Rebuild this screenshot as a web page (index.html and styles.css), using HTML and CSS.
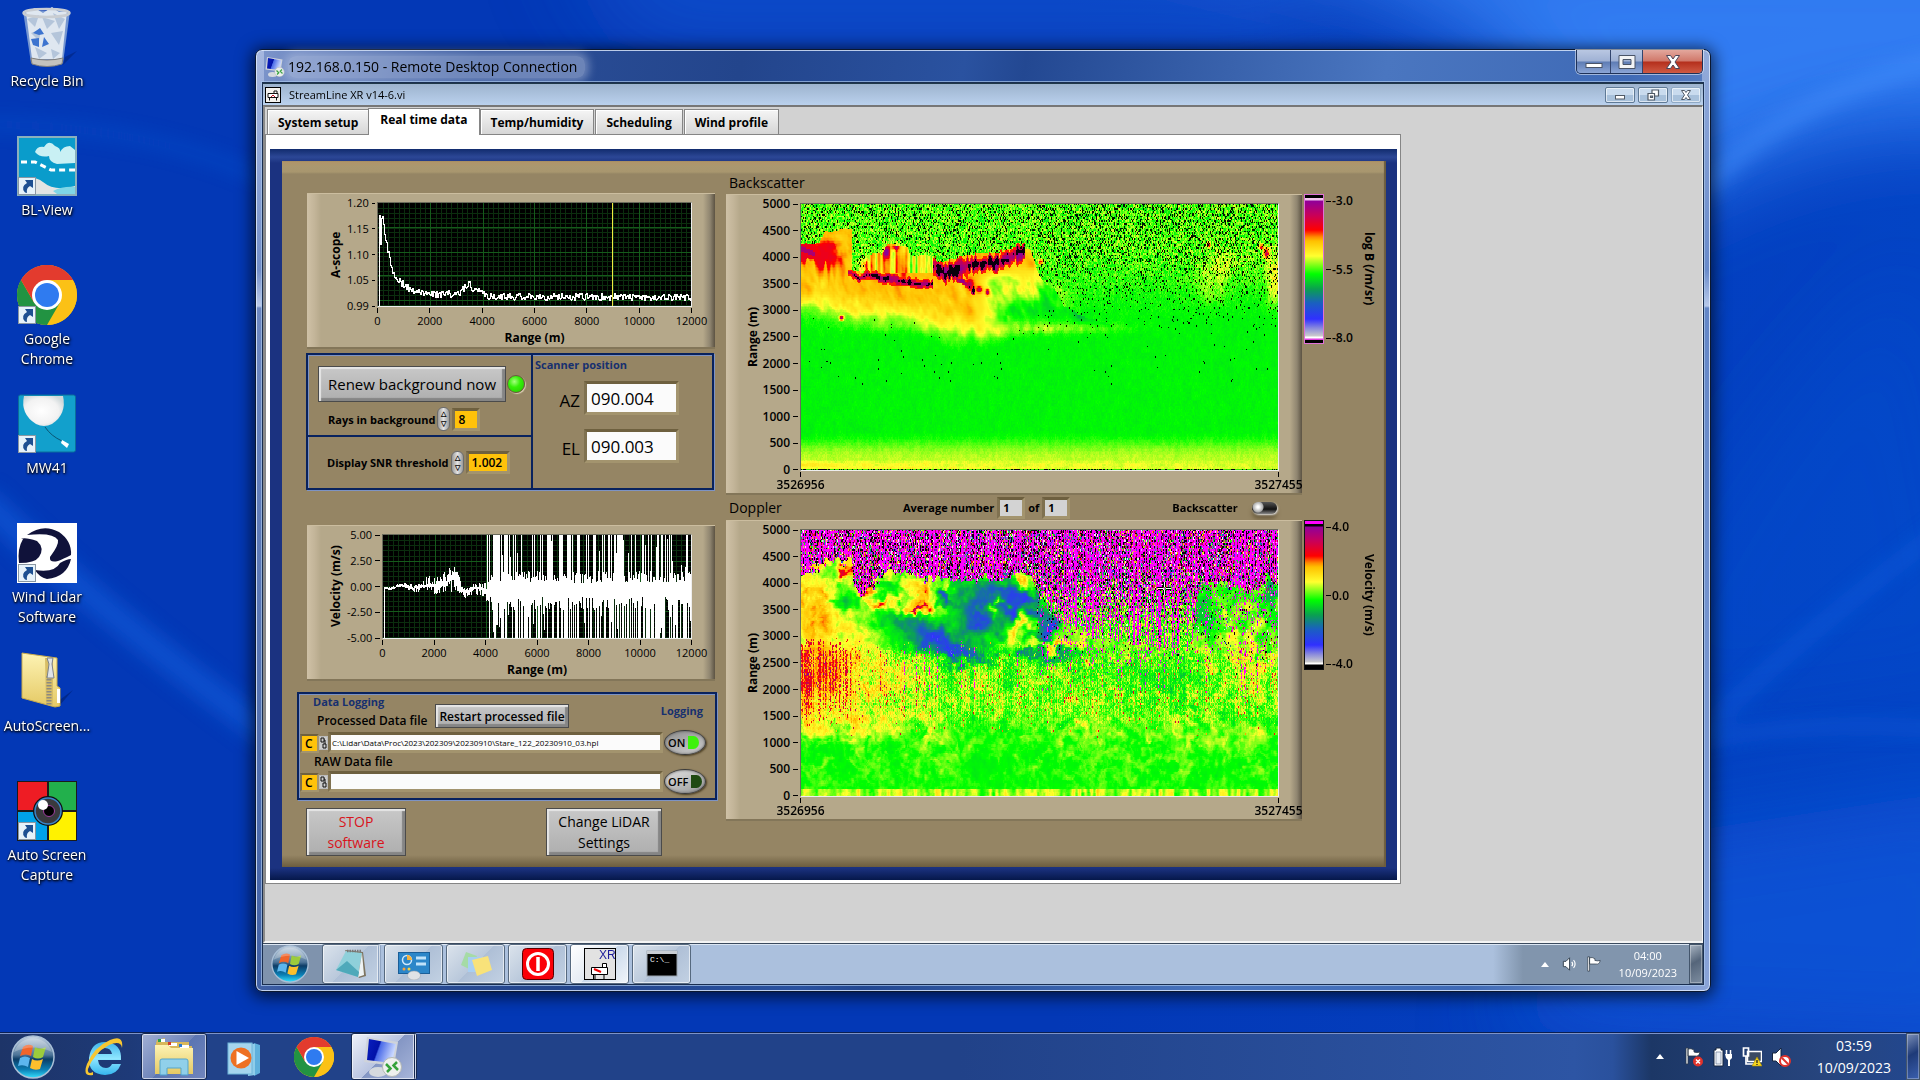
FILE: index.html
```html
<!DOCTYPE html>
<html lang="en">
<head>
  <meta charset="UTF-8">
  <meta name="viewport" content="width=device-width, initial-scale=1.0">
  <title>192.168.0.150 - Remote Desktop Connection</title>
  <link rel="stylesheet" href="styles.css">
</head>
<body>
  <!-- shared icons -->
  <svg class="defs" aria-hidden="true">
    <defs>
      <linearGradient id="orbTop" x1="0" y1="0" x2="0" y2="1">
        <stop offset="0" stop-color="#c9d6e4"/><stop offset=".45" stop-color="#4d7498"/><stop offset=".55" stop-color="#0c3c66"/><stop offset=".8" stop-color="#0b7fb5"/><stop offset="1" stop-color="#35e2ff"/>
      </linearGradient>
      <linearGradient id="screenBlue" x1="0" y1="0" x2="1" y2=".3">
        <stop offset="0" stop-color="#0a1fc0"/><stop offset=".45" stop-color="#0212a8"/><stop offset=".5" stop-color="#4a6ae8"/><stop offset="1" stop-color="#c9d8ff"/>
      </linearGradient>
      <linearGradient id="paper" x1="0" y1="0" x2="0" y2="1">
        <stop offset="0" stop-color="#fdf3b4"/><stop offset="1" stop-color="#e5c964"/>
      </linearGradient>
      <linearGradient id="ieBlue" x1="0" y1="0" x2="0" y2="1">
        <stop offset="0" stop-color="#3fb4ea"/><stop offset=".5" stop-color="#8fe6ff"/><stop offset="1" stop-color="#35b6ee"/>
      </linearGradient>
      <radialGradient id="balloon" cx=".45" cy=".5" r=".6">
        <stop offset="0" stop-color="#fff"/><stop offset=".7" stop-color="#f2f2f2"/><stop offset="1" stop-color="#cfd8da"/>
      </radialGradient>
      <symbol id="chrome" viewBox="0 0 60 60">
        <circle cx="30" cy="30" r="30" fill="#fbc116"/>
        <path d="M30 30 L4 15 A30 30 0 0 1 56 15 Z" fill="#e33b2e"/>
        <path d="M30 15 H56 A30 30 0 0 1 30 60 L43 37.500Z" fill="#fbc116"/>
        <path d="M17 37.500 L4 15 A30 30 0 0 0 30 60 L43 37.500 Z" fill="#229342"/>
        <path d="M4 15 L17 37.500 L20 20 L30 15 Z" fill="#e33b2e"/>
        <circle cx="30" cy="30" r="15" fill="#fff"/>
        <circle cx="30" cy="30" r="12" fill="#2f7bf0"/>
      </symbol>
      <symbol id="orb" viewBox="0 0 44 44">
        <circle cx="22" cy="22" r="21" fill="url(#orbTop)" stroke="#a9bfd6" stroke-width="1.500"/>
        <path d="M12 12 Q17 8 22 11 L20 21 Q15 18 9 21 Z" fill="#f0652b"/>
        <path d="M24 12 Q29 15 35 12 L32 22 Q27 25 22 22 Z" fill="#9ccb3c"/>
        <path d="M9 23 Q14 20 19 23 L17 32 Q12 29 7 31 Z" fill="#5cb6ee"/>
        <path d="M21 24 Q26 27 32 24 L29 34 Q24 36 19 33 Z" fill="#fdbf2d"/>
        <path d="M3 17 A20 20 0 0 1 41 17 Q22 8 3 17Z" fill="#fff" opacity=".25"/>
      </symbol>
      <symbol id="shortcut" viewBox="0 0 18 18">
        <rect x=".5" y=".5" width="17" height="17" fill="#e6f2fa" stroke="#8a97a3"/>
        <path d="M7 3 H15 V11 L12 9 Q8 11 9 16 L7 15.500 Q2 10 9 6 Z" fill="#1d4f91"/>
      </symbol>
      <symbol id="rdc" viewBox="0 0 40 40">
        <ellipse cx="15" cy="35" rx="9" ry="5" fill="#d5d9de"/>
        <path d="M4 0 L35 5 L31 29 L1 25 Z" fill="#cfd3da"/>
        <path d="M6 2 L33 7 L29 26 L4 23 Z" fill="url(#screenBlue)"/>
        <circle cx="29" cy="30" r="9.500" fill="#eef0ee" stroke="#b5b9b5"/>
        <path d="M23 27 l4.500 4.500 -3.500 3.500 M35 33 l-4.500 -4.500 3.500 -3.500" fill="none" stroke="#35a23a" stroke-width="2.500"/>
      </symbol>
      <symbol id="speaker" viewBox="0 0 18 16">
        <path d="M1.500 5 H4.500 L8.500 1 V15 L4.500 11 H1.500 Z" fill="#fff" stroke="#2b3846"/>
        <path d="M11 5.500 q2 2.500 0 5 M13 3.500 q3.500 4.500 0 9" fill="none" stroke="#fff" stroke-width="1.300"/>
      </symbol>
      <symbol id="flag" viewBox="0 0 18 18">
        <path d="M2 1 H4 V17 H2 Z M4 2 Q7 1 10 3 V5 Q13 6 16 5 Q15 10 11 9 L4 9 Z" fill="#fff" stroke="#2b3846" stroke-width=".8"/>
      </symbol>
      <symbol id="path" viewBox="0 0 7 12">
        <path d="M1 1 h3 v4 h-3 z M3 7 h3 v4 h-3 z M4 3 h1 v4" fill="none" stroke="#111"/>
      </symbol>
    </defs>
  </svg>

  <main class="desktop">
    <svg class="wallpaper" viewBox="0 0 1920 1080" preserveAspectRatio="none" aria-hidden="true">
      <defs>
        <filter id="soft"><feGaussianBlur stdDeviation="10"/></filter>
        <filter id="softer"><feGaussianBlur stdDeviation="45"/></filter>
      </defs>
      <g filter="url(#softer)">
        <path d="M1200 -80 L2050 -80 L2050 150 Q1860 90 1640 230 L1480 40Z" fill="#3a86fa" opacity=".85"/>
        <path d="M560 -60 L1300 -60 L1300 40 L640 40Z" fill="#1f66e6" opacity=".5"/>
        <path d="M1920 260 Q1700 470 1600 760 L2000 700Z" fill="#0a55d6" opacity=".25"/>
        <path d="M1500 1080 L1620 880 L2000 820 L2000 1100Z" fill="#0b5ae0" opacity=".6"/>
      </g>
      <g filter="url(#soft)" fill="none" stroke="#1268e6" opacity=".5">
        <path d="M-20 130 Q150 130 270 190" stroke-width="7"/>
        <path d="M-20 520 Q100 640 270 770" stroke-width="28"/>
        <path d="M1680 790 Q1780 680 1960 540" stroke-width="12"/>
        <path d="M1680 780 Q1800 750 1960 765" stroke-width="10"/>
        <path d="M1700 200 Q1800 90 1960 60" stroke-width="20" stroke="#4a94ff"/>
      </g>
    </svg>

    <nav class="icons" aria-label="Desktop">
      <a class="icon" href="#">
        <svg viewBox="0 0 60 60" aria-hidden="true">
          <path d="M48 50 L60 44 L46 58Z" fill="#001a60" opacity=".4"/>
          <path d="M6 4 L53 4 L46 56 Q30 60 14 56 Z" fill="#9cb6da" opacity=".75"/>
          <path d="M9 5 L18 1 L26 6 L35 0 L42 5 L50 4 L45 52 L15 52 Z" fill="#dfe7f0"/>
          <path d="M10 12 L22 8 L18 20Z M25 10 L38 14 L30 22Z M36 6 L48 12 L42 22Z M14 26 L24 22 L22 34Z M34 26 L46 24 L42 38Z M18 40 L30 46 L22 52Z M34 42 L43 46 L36 52Z" fill="#b4c5da"/>
          <path d="M16 26 L23 21 L27 27 L22 28Z M27 30 L32 37 L25 40Z M14 32 L22 31 L22 40 L16 38Z" fill="#3d74cf"/>
          <ellipse cx="29.500" cy="6" rx="23" ry="4" fill="none" stroke="#c9cdd2" stroke-width="2.500"/>
          <path d="M14 51 Q30 55 46 51 L45 57 Q30 62 15 57Z" fill="#c3c2be" stroke="#807f7c"/>
        </svg>
        <span>Recycle Bin</span>
      </a>
      <a class="icon" href="#">
        <svg viewBox="0 0 60 60" aria-hidden="true">
          <rect width="60" height="60" fill="#8ab0bd"/><rect x="2" y="2" width="56" height="56" fill="#0a9ccb"/>
          <path d="M18 16 q2-6 9-5 q5-8 11-1 q6 2 5 6 q3-6 10-6 l5 4 v13 l-18 1 q-8-2-8-8 q-9 2-14-4Z" fill="#c9f0f4"/>
          <path d="M4 26 H18 L34 34 H58" fill="none" stroke="#fff" stroke-width="3" stroke-dasharray="6 4"/>
          <path d="M2 58 V44 Q16 38 26 46 Q38 56 58 50 V58Z" fill="#e2e4e3"/><path d="M36 55 Q46 50 58 51 V58 H40Z" fill="#7fd6e6"/>
          <use href="#shortcut" x="1" y="41" width="18" height="18"/>
        </svg>
        <span>BL-View</span>
      </a>
      <a class="icon" href="#">
        <svg viewBox="0 0 60 60" aria-hidden="true"><use href="#chrome"/><use href="#shortcut" x="1" y="41" width="18" height="18"/></svg>
        <span>Google Chrome</span>
      </a>
      <a class="icon" href="#">
        <svg viewBox="0 0 60 60" aria-hidden="true">
          <rect x="1.500" y="1" width="57" height="57" rx="2" fill="#12a0cc" stroke="#0b6f9b"/>
          <path d="M7 2 H46 Q50 20 35 30 Q27 34 19 30 Q3 20 7 2Z" fill="url(#balloon)"/>
          <path d="M28 33 Q34 42 45 47" fill="none" stroke="#0a5674"/><path d="M45 46 l7 4 -2 4 -6 -5Z" fill="#fff"/>
          <use href="#shortcut" x="1" y="41" width="18" height="18"/>
        </svg>
        <span>MW41</span>
      </a>
      <a class="icon" href="#">
        <svg viewBox="0 0 60 60" aria-hidden="true">
          <rect width="60" height="60" fill="#fff"/>
          <path d="M4 16 Q8 14 20 18 Q28 25 22 34 Q18 40 2 40 Q0 26 6 16Z" fill="#10123a"/>
          <path d="M10 12 Q26 0 42 9 Q55 18 54 32 Q46 36 41 38 Q32 40 33 34 Q42 22 41 17 Q36 9 10 12Z" fill="#10123a"/>
          <path d="M18 47 Q38 50 43 40 Q50 36 54 36 Q50 54 30 56 Q22 54 18 47Z" fill="#10123a"/>
          <use href="#shortcut" x="1" y="41" width="18" height="18"/>
        </svg>
        <span>Wind Lidar Software</span>
      </a>
      <a class="icon" href="#">
        <svg viewBox="0 0 60 60" aria-hidden="true">
          <path d="M40 50 L56 38 L42 54Z" fill="#001a60" opacity=".5"/>
          <path d="M5 1 L40 6 V34 L43 36 V54 L38 55 L5 46 Z" fill="url(#paper)" stroke="#c9ab4c"/>
          <path d="M28 6 H36 V54 L29 52Z" fill="#d8be66"/>
          <path d="M32 24 V53" stroke="#8c8a80" stroke-width="5" stroke-dasharray="1.500 1.500"/>
          <path d="M30 6 h6 l-1 6 2 14 h-7 l2 -14Z" fill="#dfe3e8" stroke="#7c828a"/>
          <rect x="40" y="37" width="3" height="14" fill="#fff"/>
        </svg>
        <span>AutoScreen...</span>
      </a>
      <a class="icon" href="#">
        <svg viewBox="0 0 60 60" aria-hidden="true">
          <rect width="60" height="60" fill="#1b1b1b"/>
          <path d="M1 1h29v28H1z" fill="#ee1c24"/><path d="M32 1h27v28H32z" fill="#22b04c"/><path d="M1 31h29v28H1z" fill="#00a2e8"/><path d="M32 31h27v28H32z" fill="#fff200"/>
          <circle cx="31" cy="30" r="15" fill="#111"/><circle cx="31" cy="30" r="13" fill="#3a3a3e" stroke="#3a86c8" stroke-width="1.500"/>
          <circle cx="32" cy="30" r="5.500" fill="#000" stroke="#a040a0"/><circle cx="26" cy="24" r="5" fill="#fff"/>
          <use href="#shortcut" x="1" y="41" width="18" height="18"/>
        </svg>
        <span>Auto Screen Capture</span>
      </a>
    </nav>

    <section class="window">
      <header class="titlebar">
        <svg class="titlebar-icon" aria-hidden="true"><use href="#rdc"/></svg>
        <h1>192.168.0.150 - Remote Desktop Connection</h1>
        <div class="window-buttons">
          <button class="wb wb-min" aria-label="Minimize"><svg viewBox="0 0 18 16"><rect x="1" y="9.500" width="16" height="4" fill="#fff" stroke="#4a5468"/></svg></button>
          <button class="wb wb-max" aria-label="Maximize"><svg viewBox="0 0 18 16"><path d="M1 1.500h16v13H1z M5 5.500v5h8v-5z" fill="#f3f4f6" fill-rule="evenodd" stroke="#4a5468"/></svg></button>
          <button class="wb wb-close" aria-label="Close"><svg viewBox="0 0 18 16"><path d="M2.500 1.500h4l2.500 3.500 2.500-3.500h4l-4.500 6.500 4.500 6.500h-4l-2.500-3.500-2.500 3.500h-4l4.500-6.500z" fill="#fff" stroke="#4a4458"/></svg></button>
        </div>
      </header>

      <div class="client">
        <div class="mdi-title">
          <svg class="mdi-icon" viewBox="0 0 16 16" aria-hidden="true"><rect x=".5" y=".5" width="15" height="15" fill="#f4f2ee" stroke="#000"/><path d="M3 6.500h10v4H3z M4.500 10.500v3 M11.500 10.500v3 M9 6V4h3v2" fill="#fff" stroke="#111"/><path d="M6 10l2-2 2 2" stroke="#c01020" fill="none"/></svg>
          <h2>StreamLine XR v14-6.vi</h2>
          <div class="mdi-buttons">
            <button aria-label="Minimize"><svg viewBox="0 0 14 12"><rect x="2.500" y="6.500" width="9" height="3.500" fill="#fff" stroke="#505a66"/></svg></button>
            <button aria-label="Restore"><svg viewBox="0 0 14 12"><path d="M6 1h6.500v6H6z" fill="#fff" stroke="#505a66" stroke-width="1.200"/><path d="M2 4.500h6.500v6.500H2z M4.500 7v1.500h2V7z" fill="#fff" stroke="#505a66" stroke-width="1.200"/></svg></button>
            <button class="dim" aria-label="Close"><svg viewBox="0 0 14 12"><path d="M2.500 1.500h3l1.500 2 1.500-2h3l-3 4.500 3 4.500h-3l-1.500-2-1.500 2h-3l3-4.500z" fill="#fff" stroke="#505a66"/></svg></button>
          </div>
        </div>

        <div class="workspace">
          <div class="tabs" role="tablist">
            <button class="tab" role="tab">System setup</button>
            <button class="tab active" role="tab" aria-selected="true">Real time data</button>
            <button class="tab" role="tab">Temp/humidity</button>
            <button class="tab" role="tab">Scheduling</button>
            <button class="tab" role="tab">Wind profile</button>
          </div>

          <div class="pane">
            <div class="frame">
              <div class="panel">
                <div class="left">
                  <div class="chart chart-a">
                    <div class="y-title">A-scope</div>
                    <ul class="y-ticks small"><li>1.20</li><li>1.15</li><li>1.10</li><li>1.05</li><li>0.99</li></ul>
                    <canvas id="ascope" class="plot" width="314" height="104" role="img" aria-label="A-scope"></canvas>
                    <ul class="x-ticks small"><li>0</li><li>2000</li><li>4000</li><li>6000</li><li>8000</li><li>10000</li><li>12000</li></ul>
                    <div class="x-title">Range (m)</div>
                  </div>

                  <div class="settings box">
                    <div class="renew">
                      <div class="renew-row">
                        <button class="lv-button lv-large">Renew background now</button>
                        <span class="led"></span>
                      </div>
                      <div class="field">
                        <label for="rays">Rays in background</label>
                        <button class="spin" aria-label="Step rays">&#9651;<br>&#9661;</button>
                        <input class="num rays" id="rays" type="text" value="8">
                      </div>
                    </div>
                    <div class="snr field">
                      <label for="snr">Display SNR threshold</label>
                      <button class="spin" aria-label="Step threshold">&#9651;<br>&#9661;</button>
                      <input class="num" id="snr" type="text" value="1.002">
                    </div>
                    <div class="scanner">
                      <h3 class="blue">Scanner position</h3>
                      <div class="pos"><label for="az">AZ</label><input id="az" type="text" value="090.004"></div>
                      <div class="pos"><label for="el">EL</label><input id="el" type="text" value="090.003"></div>
                    </div>
                  </div>

                  <div class="chart chart-v">
                    <div class="y-title">Velocity (m/s)</div>
                    <ul class="y-ticks small"><li>5.00</li><li>2.50</li><li>0.00</li><li>-2.50</li><li>-5.00</li></ul>
                    <canvas id="velocity" class="plot" width="309" height="104" role="img" aria-label="Velocity"></canvas>
                    <ul class="x-ticks small"><li>0</li><li>2000</li><li>4000</li><li>6000</li><li>8000</li><li>10000</li><li>12000</li></ul>
                    <div class="x-title">Range (m)</div>
                  </div>

                  <div class="logging box">
                    <div class="logging-head">
                      <div>
                        <h3 class="blue">Data Logging</h3>
                        <label for="proc">Processed Data file</label>
                      </div>
                      <button class="lv-button">Restart processed file</button>
                      <h3 class="blue logging-label">Logging</h3>
                    </div>
                    <div class="path-row">
                      <span class="drive">C</span>
                      <svg class="path-icon" aria-hidden="true"><use href="#path"/></svg>
                      <input id="proc" type="text" value="C:\Lidar\Data\Proc\2023\202309\20230910\Stare_122_20230910_03.hpl">
                      <button class="oval on">ON</button>
                    </div>
                    <label class="raw-label" for="raw">RAW Data file</label>
                    <div class="path-row">
                      <span class="drive">C</span>
                      <svg class="path-icon" aria-hidden="true"><use href="#path"/></svg>
                      <input id="raw" type="text" value="">
                      <button class="oval">OFF</button>
                    </div>
                  </div>

                  <div class="actions">
                    <button class="lv-button stop">STOP<br>software</button>
                    <button class="lv-button change">Change LiDAR<br>Settings</button>
                  </div>
                </div>

                <div class="right">
                  <div class="map-head"><h3>Backscatter</h3></div>
                  <div class="map-row">
                    <div class="chart chart-map">
                      <div class="y-title">Range (m)</div>
                      <ul class="y-ticks"><li>5000</li><li>4500</li><li>4000</li><li>3500</li><li>3000</li><li>2500</li><li>2000</li><li>1500</li><li>1000</li><li>500</li><li>0</li></ul>
                      <canvas id="backscatter" class="plot" width="478" height="178" role="img" aria-label="Backscatter"></canvas>
                      <ul class="x-ticks"><li>3526956</li><li>3527455</li></ul>
                    </div>
                    <div class="scale scale-b"></div>
                    <ul class="scale-ticks"><li>-3.0</li><li>-5.5</li><li>-8.0</li></ul>
                    <div class="scale-title">log B (/m/sr)</div>
                  </div>

                  <div class="map-head">
                    <h3>Doppler</h3>
                    <div class="average">
                      <label for="avg">Average number</label>
                      <input id="avg" type="text" value="1">
                      <label for="avgof">of</label>
                      <input id="avgof" type="text" value="1">
                    </div>
                    <label class="toggle">Backscatter <input type="checkbox"></label>
                  </div>
                  <div class="map-row">
                    <div class="chart chart-map">
                      <div class="y-title">Range (m)</div>
                      <ul class="y-ticks"><li>5000</li><li>4500</li><li>4000</li><li>3500</li><li>3000</li><li>2500</li><li>2000</li><li>1500</li><li>1000</li><li>500</li><li>0</li></ul>
                      <canvas id="doppler" class="plot" width="478" height="178" role="img" aria-label="Doppler"></canvas>
                      <svg class="cross" viewBox="0 0 13 13" aria-hidden="true"><path d="M6.500 0v5M6.500 8v5M0 6.500h5M8 6.500h5" stroke="#000" stroke-width="3"/><path d="M6.500 0v5M6.500 8v5M0 6.500h5M8 6.500h5" stroke="#fff"/></svg>
                      <ul class="x-ticks"><li>3526956</li><li>3527455</li></ul>
                    </div>
                    <div class="scale scale-v"></div>
                    <ul class="scale-ticks"><li>4.0</li><li>0.0</li><li>-4.0</li></ul>
                    <div class="scale-title">Velocity (m/s)</div>
                  </div>
                </div>
              </div>
            </div>
          </div>
        </div>

        <footer class="taskbar remote">
          <button class="start" aria-label="Start"><svg aria-hidden="true"><use href="#orb"/></svg></button>
          <div class="tasks">
            <button class="task stacked" aria-label="Notepad"><svg viewBox="0 0 32 32"><path d="M10 2 L28 4 L31 28 L24 30Z" fill="#7d7460"/><path d="M11 3 L27 5 L23 29 L1 22 Z" fill="#8fd0da"/><path d="M27 5 L23 29 L29 27Z" fill="#eef3f4"/><path d="M1 22 L12 13 L24 24 L23 29Z" fill="#4fa9ba"/><path d="M12 3h15" stroke="#777" stroke-width="2.500" stroke-dasharray="1.500 1"/></svg></button>
            <button class="task" aria-label="Control panel"><svg viewBox="0 0 32 32"><rect x=".5" y="4.500" width="31" height="21" fill="#2b86c9" stroke="#1a5e98"/><circle cx="9" cy="12" r="4.500" fill="none" stroke="#cfe8fb" stroke-width="1.500"/><path d="M9 12V7a5 5 0 0 1 5 5z" fill="#f6b23d"/><path d="M18 10h10M18 16h10" stroke="#bfe2fa" stroke-width="3"/><circle cx="6" cy="21" r="1.500" fill="#f6a23d"/><circle cx="11" cy="21" r="1.500" fill="#f6d23d"/><ellipse cx="16" cy="27.500" rx="6.500" ry="4.500" fill="#dfe2e6" stroke="#9aa0a8" stroke-width=".5"/></svg></button>
            <button class="task" aria-label="Sticky notes"><svg viewBox="0 0 32 32"><path d="M6 4 L17 8 L11 22 L1 17Z" fill="#a5dba6"/><path d="M8 9 h15 v15 h-15z" fill="#a8cff2"/><path d="M12 12 L28 8 L32 22 L17 28Z" fill="#f8e27a"/></svg></button>
            <button class="task" aria-label="Power"><svg viewBox="0 0 32 32"><rect x=".5" y=".5" width="31" height="31" rx="4" fill="#fb0007" stroke="#5a0000"/><circle cx="16" cy="16" r="10.500" fill="none" stroke="#fff" stroke-width="3"/><path d="M16 9v14" stroke="#fff" stroke-width="3.500"/></svg></button>
            <button class="task current" aria-label="StreamLine XR"><svg viewBox="0 0 32 32"><rect x=".5" y=".5" width="31" height="31" fill="#e2e2e2" stroke="#000"/><text class="xr" x="15" y="11">XR</text><path d="M7.500 19.500h16v7h-16z M11 27v4.500 M20 27v4.500 M9.500 27v4.500 M18.500 19v-3.500h4v3.500" fill="#fff" stroke="#000"/><path d="M10 21l7 3" stroke="#e00" stroke-width="2"/></svg></button>
            <button class="task" aria-label="Command prompt"><svg viewBox="0 0 32 32"><rect x="1" y="3" width="30" height="25" fill="#000" stroke="#9aa4ae"/><rect x="1" y="3" width="30" height="3" fill="#c9ced4"/><text class="cmd" x="4" y="14">C:\_</text></svg></button>
          </div>
          <div class="tray">
            <span class="chevron"></span>
            <svg class="tray-icon" aria-hidden="true"><use href="#speaker"/></svg>
            <svg class="tray-icon" aria-hidden="true"><use href="#flag"/></svg>
            <time class="clock">04:00<br>10/09/2023</time>
          </div>
          <button class="peek" aria-label="Show desktop"></button>
        </footer>
      </div>
    </section>
  </main>

  <footer class="taskbar host">
    <button class="start" aria-label="Start"><svg aria-hidden="true"><use href="#orb"/></svg></button>
    <div class="tasks">
      <button class="task plain" aria-label="Internet Explorer"><svg viewBox="0 0 40 40"><path d="M37 23 H14 Q15 31 22 31 Q26 31 28 27 H37 Q33 38 21 38 Q4 37 5 21 Q7 5 21 5 Q38 6 37 23Z M14 17 H28 Q27 11 21 11 Q15 11 14 17Z" fill="url(#ieBlue)" fill-rule="evenodd"/><path d="M9 38 Q-2 40 3 27 Q10 10 26 3 Q40 -3 38 11 Q37 3 25 8 Q10 16 4 32 Q3 38 9 35Z" fill="#f7c631"/></svg></button>
      <button class="task" aria-label="Windows Explorer"><svg viewBox="0 0 40 40"><path d="M3 3 l8-2 v4 h24 v4 h3 v28 H2 V6z" fill="#d9b85a"/><path d="M1 8 H14 L17 11 H39 V37 H1Z" fill="url(#paper)"/><path d="M5 2h6v3H5z M15 6h8v3h-8z M26 8h9v3h-9z" fill="#fff"/><path d="M4 2h3v3H4z" fill="#2aa04a"/><path d="M14 5h3v3h-3z" fill="#d23a2a"/><path d="M25 7h3v3h-3z" fill="#2a7ad2"/><path d="M6 38 V24 q0-2 2-2 h24 q2 0 2 2 V38 h-7 V31 H13 v7z" fill="#8cd0f0" opacity=".95" stroke="#4fa3cf"/></svg></button>
      <button class="task plain" aria-label="Media Player"><svg viewBox="0 0 40 40"><path d="M30 6 l6 2 v28 l-6 3z" fill="#5fb0dc"/><path d="M24 6 l7 1 v31 l-7 1z" fill="#8fcdea"/><rect x="4" y="6" width="24" height="31" fill="#a5d5ee" stroke="#6fb4d8"/><circle cx="17" cy="21" r="10.500" fill="#ee7022"/><path d="M12.500 14 L25 21 L12.500 28Z" fill="#fff"/></svg></button>
      <button class="task plain" aria-label="Google Chrome"><svg aria-hidden="true"><use href="#chrome"/></svg></button>
      <button class="task current stacked" aria-label="Remote Desktop"><svg aria-hidden="true"><use href="#rdc"/></svg></button>
    </div>
    <div class="tray">
      <span class="chevron"></span>
      <svg class="tray-icon" viewBox="0 0 20 20" aria-hidden="true"><use href="#flag" width="18" height="18"/><circle cx="14" cy="14.500" r="5" fill="#e0322b"/><path d="M12 12.500l4 4m0-4l-4 4" stroke="#fff" stroke-width="1.500"/></svg>
      <svg class="tray-icon" viewBox="0 0 20 20" aria-hidden="true"><path d="M1 3h2V1h5v2h2v16H1z" fill="#fff" stroke="#15243f"/><path d="M3 5h5v12H3z" fill="#e9eef6" stroke="#5c6d8c" stroke-width=".6"/><path d="M12 7h7v4l-2 2v6h-2v-6l-2-2z" fill="#fff"/><path d="M13.500 3v4 M17.500 3v4" stroke="#fff" stroke-width="1.500"/></svg>
      <svg class="tray-icon" viewBox="0 0 20 20" aria-hidden="true"><rect x="5.500" y="4.500" width="14" height="10" fill="#3b4b63" stroke="#fff" stroke-width="1.500"/><path d="M1.500 1h5v8h-5z M4 9v8h8" fill="none" stroke="#fff" stroke-width="1.700"/><path d="M15 10l5 9H10z" fill="#f6d51f" stroke="#a88a00" stroke-width=".6"/><path d="M15 13v3m0 1v1" stroke="#222" stroke-width="1.300"/></svg>
      <svg class="tray-icon" viewBox="0 0 20 20" aria-hidden="true"><path d="M1.500 6H5L10 1v18l-5-5H1.500z" fill="#fff" stroke="#15243f"/><circle cx="14" cy="14" r="5" fill="#fff" stroke="#e0322b" stroke-width="2"/><path d="M11 11l6 6" stroke="#e0322b" stroke-width="2"/></svg>
      <time class="clock">03:59<br>10/09/2023</time>
    </div>
    <button class="peek" aria-label="Show desktop"></button>
  </footer>

  <script src="script.js"></script>
</body>
</html>
```

FILE: styles.css
```css
* {
  box-sizing: border-box;
}

body {
  margin: 0;
  min-height: 100vh;
  display: flex;
  flex-direction: column;
  background: #0338b6;
  color: #000;
  font-family: "Open Sans", "Noto Sans", sans-serif;
  font-size: 12px;
  overflow: hidden;
}

h1, h2, h3, ul {
  margin: 0;
  padding: 0;
  list-style: none;
  font-size: inherit;
}

button, input {
  font: inherit;
  color: inherit;
  margin: 0;
  border: none;
  border-radius: 0;
}

button {
  padding: 0;
  cursor: pointer;
}

.defs {
  position: absolute;
  width: 0;
  height: 0;
}

/* desktop */
.desktop {
  flex: 1;
  position: relative;
}

.wallpaper {
  position: absolute;
  inset: 0;
  width: 100%;
  height: 100%;
  background: linear-gradient(90deg, #0338b6 55%, #0443c4 100%);
}

.icons {
  position: relative;
  width: 94px;
  padding-top: 7px;
}

.icon {
  display: flex;
  flex-direction: column;
  align-items: center;
  height: 129px;
  color: #fff;
  font-size: 14px;
  line-height: 20px;
  text-align: center;
  text-decoration: none;
  text-shadow: 0 1px 2px #000, 1px 1px 3px #000;
}

.icon svg {
  width: 60px;
  height: 60px;
  margin-bottom: 4px;
  flex-shrink: 0;
}

/* remote desktop window */
.window {
  position: absolute;
  top: 49px;
  left: 255px;
  right: 209px;
  bottom: 40px;
  display: flex;
  flex-direction: column;
  padding: 0 7px 7px;
  border: 1px solid #0b1830;
  border-radius: 7px;
  background:
    linear-gradient(180deg, rgba(200, 212, 240, .55) 0, rgba(120, 150, 210, .35) 220px, rgba(220, 230, 250, .7) 256px, transparent 258px) 0 0 / 8px 100% no-repeat,
    linear-gradient(180deg, rgba(200, 212, 240, .55) 0, rgba(120, 150, 210, .35) 220px, rgba(220, 230, 250, .7) 256px, transparent 258px) 100% 0 / 8px 100% no-repeat,
    linear-gradient(100deg, #7f97cc 0, #2c4f98 220px, #23458c 480px, #2a52a0 700px, #234892 760px, #4a76c0 70%, #3f6ab6 85%, #8aa4d8 100%);
  box-shadow: inset 0 0 0 1px rgba(225, 236, 255, .8), 0 2px 16px 3px rgba(0, 0, 0, .65);
}

.titlebar {
  display: flex;
  align-items: center;
  height: 33px;
  padding-left: 2px;
}

.titlebar-icon {
  width: 20px;
  height: 20px;
}

.titlebar h1 {
  margin-left: 3px;
  padding: 0 8px 0 0;
  font-size: 14px;
  font-weight: 400;
  line-height: 22px;
  background: rgba(190, 202, 228, .45);
  box-shadow: 0 0 8px 4px rgba(190, 202, 228, .45);
  border-radius: 8px;
}

.window-buttons {
  display: flex;
  align-self: flex-start;
  margin-left: auto;
  border: 1px solid #1e3158;
  border-top: none;
  border-radius: 0 0 5px 5px;
  box-shadow: 0 0 0 1px rgba(255, 255, 255, .5);
  overflow: hidden;
}

.wb {
  display: flex;
  align-items: center;
  justify-content: center;
  width: 34px;
  height: 23px;
  background: linear-gradient(#b9c7e2, #9fb1d4 48%, #5e7cb4 52%, #8ba5d6);
  border-right: 1px solid #33456e;
}

.wb svg {
  width: 18px;
  height: 16px;
}

.wb-max {
  width: 32px;
}

.wb-close {
  width: 59px;
  border-right: none;
  background: linear-gradient(#e3a79d, #d0786a 48%, #b42f1c 52%, #cf5a44);
}

.client {
  flex: 1;
  display: flex;
  flex-direction: column;
  outline: 1px solid #1a2e50;
  box-shadow: 0 0 0 2px rgba(170, 200, 235, .7);
}

.mdi-title {
  display: flex;
  align-items: center;
  height: 22px;
  padding: 0 2px;
  border-top: 1px solid #203848;
  background: linear-gradient(#9db3ce, #bad1ed);
}

.mdi-icon {
  width: 16px;
  height: 16px;
}

.mdi-title h2 {
  margin-left: 8px;
  font-size: 11px;
  font-weight: 400;
}

.mdi-buttons {
  display: flex;
  gap: 3px;
  margin-left: auto;
}

.mdi-buttons button {
  display: flex;
  align-items: center;
  justify-content: center;
  width: 30px;
  height: 16px;
  border: 1px solid #5f7a96;
  border-radius: 2px;
  box-shadow: inset 0 0 0 1px rgba(255, 255, 255, .6);
  background: linear-gradient(#c9dbee 50%, #a8c1db 50%);
}

.mdi-buttons svg {
  width: 14px;
  height: 12px;
}

.mdi-buttons .dim {
  border-color: #8fa9c4;
}

.workspace {
  flex: 1;
  background: #d2d2d2;
  border: 1px solid #f4f4f4;
  border-top: 2px solid #777;
  border-left: 2px solid #8a8a8a;
  border-bottom-width: 2px;
}

.tabs {
  display: flex;
  align-items: flex-end;
  gap: 1px;
  height: 27px;
  padding-left: 2px;
}

.tab {
  height: 25px;
  padding: 0 10px;
  font-weight: 700;
  background: linear-gradient(#f5f5f5, #d6d6d6);
  border: 1px solid #858585;
  border-width: 1px 1px 0 1px;
  box-shadow: inset 1px 1px 0 #fff;
}

.tab.active {
  height: 27px;
  margin: 0 -1px -1px -2px;
  padding: 0 11px 6px;
  background: #fff;
  z-index: 1;
}

.pane {
  width: fit-content;
  padding: 14px 3px 3px 4px;
  background: #fff;
  border: 1px solid #858585;
}

.frame {
  padding: 12px 11px 13px 12px;
  background: linear-gradient(#122c6e, #2c4796 8px, #1b3280 14px, #1b3280 calc(100% - 12px), #06184a);
}

/* front panel */
.panel {
  display: flex;
  gap: 9px;
  padding: 10px 9px 11px 15px;
  background: linear-gradient(#b09468, #aa9870 6px, #a8966e 11px, #958564 13px, #958564 calc(100% - 12px), #6c5d3f);
  box-shadow: inset -2px 0 1px #6c5d3f;
  font-weight: 600;
}

.left {
  width: 420px;
  padding-top: 22px;
}

.chart {
  position: relative;
  display: grid;
  padding: 8px 23px 0 18px;
  background:
    linear-gradient(90deg, #cfc1a6, #c2b498 8px, transparent 14px),
    linear-gradient(270deg, #5c5343, #8f8570 5px, transparent 12px),
    #b5a88a;
  border-top: 1px solid #cbbd9f;
  border-bottom: 2px solid #837659;
}

.chart-a {
  grid-template: 105px 23px 1fr / 22px 30px 315px;
  width: 408px;
  height: 156px;
  margin-left: 10px;
}

.chart-v {
  grid-template: 105px 23px 1fr / 22px 35px 310px;
  width: 408px;
  height: 156px;
  margin: 35px 0 11px 10px;
}

.chart-map {
  grid-template: 268px 1fr / 18px 38px 479px;
  width: 576px;
  height: 301px;
}

.y-title {
  display: flex;
  align-items: center;
  justify-content: center;
  writing-mode: vertical-rl;
  transform: rotate(180deg);
  line-height: 16px;
  font-weight: 700;
}

.y-ticks {
  display: flex;
  flex-direction: column;
  justify-content: space-between;
  margin: -6px 0;
  line-height: 14px;
}

.small {
  font-size: 11px;
  font-weight: 400;
}

.y-ticks li {
  display: flex;
  align-items: center;
  justify-content: flex-end;
  gap: 3px;
}

.y-ticks li::after {
  content: "";
  width: 5px;
  height: 1px;
  margin-right: 2px;
  background: #000;
}

.plot {
  width: 100%;
  height: 100%;
  border: 1px solid #6a6a5c;
  border-right-color: #eee;
  border-bottom-color: #eee;
  image-rendering: pixelated;
}

.x-ticks {
  grid-column: 3;
  display: flex;
  justify-content: space-between;
  line-height: 14px;
}

.x-ticks li {
  display: flex;
  flex-direction: column;
  align-items: center;
  width: 1px;
  white-space: nowrap;
}

.x-ticks li::before {
  content: "";
  width: 1px;
  height: 5px;
  margin: 1px 0;
  background: #000;
  flex-shrink: 0;
}

.x-title {
  grid-column: 3;
  text-align: center;
  line-height: 16px;
  font-weight: 700;
}

.box {
  border: 2px solid #08225e;
  box-shadow: inset 1px 1px 0 #7d93c4, 1px 1px 0 #7d93c4;
}

.blue {
  color: #17306f;
  font-size: 11px;
  font-weight: 700;
}

.settings {
  display: grid;
  grid-template: 82px 1fr / 223px 1fr;
  width: 408px;
  height: 137px;
  margin: 4px 0 0 9px;
}

.renew {
  border-bottom: 2px solid #08225e;
  padding: 11px 0 0 10px;
}

.renew-row {
  display: flex;
  align-items: center;
  gap: 1px;
}

.lv-button {
  background: linear-gradient(#c8c8c8, #aeaeae);
  border: 1px solid #4b4b4b;
  box-shadow: inset 2px 2px 1px #e6e6e6, inset -3px -3px 1px #858585;
  font-weight: 600;
}

.lv-large {
  width: 188px;
  height: 36px;
  font-size: 15px;
  font-weight: 400;
}

.led {
  width: 18px;
  height: 18px;
  border-radius: 50%;
  border: 1px solid #6b5c3e;
  background: radial-gradient(circle at 40% 35%, #a6ff80, #35f008 40%, #22c400);
  box-shadow: 1px 1px 1px #d8ccb0;
}

.field {
  display: flex;
  align-items: center;
}

.renew .field {
  margin: 5px 0 0 10px;
}

.field label {
  font-size: 11px;
  font-weight: 700;
}

.spin {
  width: 13px;
  height: 24px;
  margin: 0 2px;
  border-radius: 6px;
  background: linear-gradient(90deg, #999, #e4e4e4, #999);
  border: 1px solid #6c6c6c;
  font-size: 7px;
  line-height: 10px;
}

.num {
  width: 44px;
  height: 23px;
  padding: 0 3px;
  background: #ffc20a;
  border: 3px solid;
  border-color: #6e603f #a3946e #a3946e #7f7150;
}

.rays {
  width: 28px;
}

.snr {
  grid-row: 2;
  padding: 0 0 0 19px;
}

.scanner {
  grid-area: 1 / 2 / 3 / 3;
  border-left: 2px solid #08225e;
  padding: 2px 33px 0 2px;
}

.scanner h3 {
  line-height: 15px;
  margin-bottom: 9px;
}

.pos {
  display: flex;
  align-items: center;
  justify-content: flex-end;
  gap: 4px;
  margin-bottom: 14px;
  font-size: 17px;
  font-weight: 400;
}

.pos label {
  padding-top: 6px;
  line-height: 20px;
}

.pos input {
  width: 95px;
  height: 34px;
  padding: 0 4px;
  background: #fbfbfb;
  border: 3px solid;
  border-color: #6e603f #a3946e #a3946e #7f7150;
}

.logging {
  height: 108px;
  padding: 0 9px 0 1px;
}

.logging-head {
  display: flex;
  align-items: flex-end;
  height: 36px;
  padding: 0 3px 0 13px;
}

.logging-head > div {
  width: 122px;
  line-height: 19px;
}

.logging-head .blue {
  line-height: 18px;
}

.logging-head label {
  padding-left: 4px;
}

.logging-head .lv-button {
  width: 134px;
  height: 24px;
  margin-bottom: 2px;
}

.logging-head .logging-label {
  margin: 0 0 10px auto;
}

.path-row {
  display: flex;
  align-items: center;
  height: 25px;
}

.drive {
  width: 19px;
  height: 19px;
  margin-top: 2px;
  padding-left: 3px;
  line-height: 16px;
  background: #ffc20a;
  border: 2px solid;
  border-color: #6e603f #a3946e #a3946e #7f7150;
}

.path-icon {
  width: 7px;
  height: 12px;
  margin: 0 1px;
  background: #ccc;
  outline: 1px solid #bbb;
}

.path-row input {
  flex: 1;
  min-width: 0;
  height: 21px;
  margin-right: 1px;
  padding: 0 1px;
  font-size: 8px;
  font-weight: 400;
  background: #fbfbfb;
  border: 3px solid;
  border-color: #6e603f #a3946e #a3946e #7f7150;
}

.oval {
  display: flex;
  align-items: center;
  gap: 3px;
  width: 42px;
  height: 25px;
  padding-left: 3px;
  border-radius: 50%;
  background: linear-gradient(160deg, #e2e2e2, #9a9a9a);
  border: 1px solid #3c3c3c;
  box-shadow: 1px 1px 2px #4a3d22, inset 0 0 3px #555;
  font-size: 11px;
}

.oval::after {
  content: "";
  width: 11px;
  height: 13px;
  border-radius: 0 100% 100% 0;
  background: #1f4a12;
}

.oval.on {
  background: linear-gradient(160deg, #8e8e8e, #d0d0d0);
}

.oval.on::after {
  background: #3df20c;
}

.raw-label {
  display: block;
  padding-left: 14px;
  line-height: 14px;
}

.actions {
  display: flex;
  justify-content: space-between;
  padding: 8px 55px 0 9px;
}

.actions .lv-button {
  height: 48px;
  font-size: 14px;
  font-weight: 400;
  line-height: 21px;
}

.actions .stop {
  width: 100px;
  color: #d8141c;
}

.actions .change {
  width: 116px;
}

/* backscatter and doppler */
.map-head {
  display: flex;
  align-items: center;
  height: 25px;
  padding-left: 3px;
}

.map-head:first-child {
  height: 23px;
}

.map-head h3 {
  width: 174px;
  font-size: 14px;
  font-weight: 400;
}

.average {
  display: flex;
  align-items: center;
  gap: 3px;
  font-size: 11px;
  font-weight: 700;
}

.average input {
  width: 28px;
  height: 22px;
  padding: 0 3px;
  background: #d3d3d3;
  border: 3px solid;
  border-color: #6e603f #a3946e #a3946e #7f7150;
}

.toggle {
  display: flex;
  align-items: center;
  gap: 14px;
  margin-left: 102px;
  font-size: 11px;
  font-weight: 700;
}

.toggle input {
  appearance: none;
  width: 25px;
  height: 12px;
  border-radius: 6px;
  background: radial-gradient(circle at 6px 5px, #fff 1px, #aaa 5px, transparent 6px), linear-gradient(#555, #111 60%, #888);
  box-shadow: 1px 1px 2px #ddd, 0 5px 4px #6c5d3f;
}

.map-row {
  display: flex;
}

.scale {
  width: 20px;
  height: 150px;
  margin-left: 2px;
  border: 1px solid #e070d8;
}

.scale-b {
  background: linear-gradient(#000 3px, #f3c6ef 3px, #f3c6ef 5px, #90009a 6px, #c8005a 20px, #ff0000 35px, #ff8c00 42px, #ffc000 46px, #ffff30 61px, #00ff00 79px, #0aa050 94px, #1a60c0 108px, #3030ff 124px, #8888dd 133px, #ccc 141px, #fff 142px, #fff 143px, #e040e0 144px, #e040e0 145px, #000 145px);
}

.scale-v {
  border-color: #111;
  background: linear-gradient(#ff00ff 3px, #000 3px, #000 5px, #90009a 6px, #c8005a 20px, #ff0000 35px, #ff8c00 42px, #ffc000 46px, #ffff30 61px, #00ff00 79px, #0aa050 94px, #1a60c0 108px, #3030ff 124px, #8888dd 133px, #ccc 141px, #fff 142px, #fff 143px, #000 144px);
}

.scale-ticks {
  display: flex;
  flex-direction: column;
  justify-content: space-between;
  width: 36px;
  height: 151px;
  line-height: 14px;
}

.scale-ticks li {
  display: flex;
  align-items: center;
}

.scale-ticks li::before {
  content: "";
  width: 5px;
  height: 1px;
  margin: 0 1px 0 2px;
  background: #000;
}

.scale-title {
  height: 150px;
  margin-left: 1px;
  writing-mode: vertical-rl;
  text-align: center;
  line-height: 16px;
  font-weight: 700;
}

.cross {
  position: absolute;
  left: 75%;
  top: 61px;
  width: 13px;
  height: 13px;
}

/* taskbars */
.taskbar {
  position: relative;
  display: flex;
  align-items: center;
  color: #fff;
}

.remote {
  height: 41px;
  border-top: 1px solid #3a4a5e;
  box-shadow: inset 0 1px 0 #dbe6f3;
  background: linear-gradient(90deg, #7f93ad 59px, #9fb4d0 61px, #abc0dd 120px, #abc0dd calc(100% - 210px), #8195ad calc(100% - 180px));
}

.host {
  height: 48px;
  border-top: 1px solid #0b1f52;
  box-shadow: inset 0 1px 0 #7d93c8;
  background: linear-gradient(90deg, #1d3468 0, #1e3a78 130px, #214289 200px, #214289 50%, #2d55a4 82%, #2a519d 84%, #1c3766 86%, #27457e 95%, #22478f);
}

.start {
  display: flex;
  background: none;
}

.remote .start svg {
  width: 38px;
  height: 38px;
  margin: 0 13px 0 8px;
}

.host .start svg {
  width: 44px;
  height: 44px;
  margin-left: 11px;
}

.tasks {
  display: flex;
  gap: 3px;
  height: 100%;
}

.task {
  display: flex;
  align-items: center;
  justify-content: center;
  width: 59px;
  border: 1px solid #56697f;
  border-radius: 3px;
  background: linear-gradient(135deg, #dbe3ec, #b9c8db 50%, #aebfd6 50%, #c2d1e3);
  box-shadow: inset 0 0 0 1px rgba(255, 255, 255, .6);
}

.remote .task.current {
  background: linear-gradient(135deg, #fff, #e4ebf3 50%, #c9d8ea 50%, #f0f5fa);
}

.task svg {
  width: 32px;
  height: 32px;
}

.stacked {
  border-right: 3px double #8fa4c2;
}

.host .tasks {
  gap: 4px;
  margin-left: 16px;
}

.host .task {
  width: 66px;
  background: linear-gradient(135deg, #a2b0d4, #6f85ba 50%, #5b75b2 50%, #7186bd);
  border-color: #14274f;
}

.host .task.plain {
  background: none;
  border: none;
  box-shadow: none;
}

.host .task.current {
  background: linear-gradient(135deg, #eef1f9, #b9c4e0 50%, #8496c4 50%, #a8b6da);
}

.host .task svg {
  width: 40px;
  height: 40px;
}

.xr {
  font: 12px "Liberation Sans", sans-serif;
  fill: #1b1b9a;
}

.cmd {
  font: 8px "Liberation Mono", monospace;
  fill: #fff;
}

.tray {
  display: flex;
  align-items: center;
  margin-left: auto;
}

.chevron {
  border: 4px solid transparent;
  border-bottom: 5px solid #fff;
  border-top: 0;
}

.tray-icon {
  width: 16px;
  height: 16px;
}

.clock {
  text-align: center;
  font-weight: 400;
}

.remote .tray {
  gap: 8px;
}

.remote .chevron {
  margin-right: 5px;
}

.remote .clock {
  margin: 0 12px 0 9px;
  font-size: 11px;
  line-height: 17px;
}

.host .tray {
  gap: 9px;
}

.host .chevron {
  margin-right: 11px;
}

.host .tray-icon {
  width: 20px;
  height: 20px;
}

.host .clock {
  margin: 0 15px 0 17px;
  font-size: 14px;
  line-height: 22px;
}

.peek {
  width: 14px;
  align-self: stretch;
  border: 1px solid #43556b;
  background: linear-gradient(150deg, #a8b4c2, #55657a 45%, #7d8da0);
  box-shadow: inset 0 0 0 1px rgba(255, 255, 255, .3);
}

.host .peek {
  background: linear-gradient(150deg, #7d90b8, #1e3a78 45%, #3a5fae);
}
```

FILE: script.js
```js
// small seeded generator so the traces are the same on every load
let seed = 20230910;
function rnd() {
  seed = (seed * 1664525 + 1013904223) >>> 0;
  return seed / 4294967296;
}

function hash(x, y) {
  let n = Math.imul(x, 374761393) + Math.imul(y, 668265263);
  n = Math.imul(n ^ (n >>> 13), 1274126177);
  return ((n ^ (n >>> 16)) >>> 0) / 4294967296;
}

// smooth value noise
function noise(x, y) {
  const xi = Math.floor(x), yi = Math.floor(y);
  let fx = x - xi, fy = y - yi;
  fx = fx * fx * (3 - 2 * fx);
  fy = fy * fy * (3 - 2 * fy);
  const a = hash(xi, yi), b = hash(xi + 1, yi), c = hash(xi, yi + 1), d = hash(xi + 1, yi + 1);
  return a + (b - a) * fx + (c - a) * fy + (a - b - c + d) * fx * fy;
}

function fbm(x, y) {
  return noise(x, y) * 0.55 + noise(x * 2.1, y * 2.1 + 9) * 0.3 + noise(x * 4.3 + 5, y * 4.3) * 0.15;
}

// linear interpolation through [x, y] points
function curve(pts, x) {
  if (x <= pts[0][0]) return pts[0][1];
  for (let i = 1; i < pts.length; i++) {
    if (x <= pts[i][0]) {
      const [x0, y0] = pts[i - 1], [x1, y1] = pts[i];
      return y0 + (y1 - y0) * (x - x0) / (x1 - x0);
    }
  }
  return pts[pts.length - 1][1];
}

function step(a, b, v) {
  const t = Math.min(1, Math.max(0, (v - a) / (b - a)));
  return t * t * (3 - 2 * t);
}

function blobs(list, x, h) {
  let s = 0;
  for (const [bx, bh, rx, rh, amp] of list) {
    const d = ((x - bx) / rx) ** 2 + ((h - bh) / rh) ** 2;
    if (d < 6) s += amp * Math.exp(-d);
  }
  return s;
}

const RAMP = [
  [0, 255, 255, 255], [0.1, 150, 150, 225], [0.14, 48, 48, 255], [0.26, 26, 96, 190],
  [0.38, 10, 165, 80], [0.5, 0, 255, 0], [0.62, 255, 255, 45], [0.72, 255, 190, 0],
  [0.77, 255, 130, 0], [0.81, 255, 0, 0], [0.9, 200, 0, 80], [1, 140, 0, 150]
];

function ramp(v) {
  v = Math.min(1, Math.max(0, v));
  for (let i = 1; i < RAMP.length; i++) {
    if (v <= RAMP[i][0]) {
      const a = RAMP[i - 1], b = RAMP[i], t = (v - a[0]) / (b[0] - a[0]);
      return [a[1] + (b[1] - a[1]) * t, a[2] + (b[2] - a[2]) * t, a[3] + (b[3] - a[3]) * t];
    }
  }
  return [140, 0, 150];
}

function paint(id, field) {
  const canvas = document.getElementById(id);
  const ctx = canvas.getContext("2d");
  const img = ctx.createImageData(canvas.width, canvas.height);
  for (let y = 0; y < canvas.height; y++) {
    for (let x = 0; x < canvas.width; x++) {
      const c = field(x, 5 * (1 - y / (canvas.height - 1)));
      const i = (y * canvas.width + x) * 4;
      img.data[i] = c[0];
      img.data[i + 1] = c[1];
      img.data[i + 2] = c[2];
      img.data[i + 3] = 255;
    }
  }
  ctx.putImageData(img, 0, 0);
}

const BLACK = [10, 0, 12];
const MAGENTA = [255, 0, 255];

// backscatter: cloud edges in km over profile number
const cloudTop = [[0, 4.25], [18, 4.3], [24, 4.5], [50, 4.55], [51, 3.75], [60, 3.75], [68, 4.05], [80, 4.1], [86, 4.25], [106, 4.2], [110, 4.05], [132, 4.05], [136, 3.9], [170, 4.05], [200, 4.1], [216, 4.2], [228, 4.15], [236, 3.75], [244, 3.5], [254, 3.4], [264, 3.05], [290, 2.85], [310, 2.75]];
const cloudBase = [[0, 3.0], [30, 3.0], [60, 2.9], [90, 2.85], [130, 2.65], [150, 2.55], [180, 2.5], [200, 2.6], [215, 2.9], [235, 3.0], [262, 3.0], [310, 2.8]];
const coreLine = [[49, 3.72], [58, 3.6], [66, 3.68], [80, 3.62], [98, 3.56], [112, 3.52], [131, 3.5]];
const coreLine2 = [[132, 3.82], [142, 3.72], [154, 3.74], [166, 3.84], [178, 3.9], [190, 3.88], [205, 3.97], [214, 4.05], [224, 4.15]];
const redSpots = [[40, 2.86, 2, 0.04, 0.5], [85, 4.1, 3, 0.1, 0.3], [93, 4.2, 4, 0.06, 0.25], [102, 3.8, 3, 0.25, 0.12], [240, 3.92, 3, 0.05, 0.35], [408, 4.24, 2, 0.05, 0.4], [466, 4.08, 3, 0.1, 0.35], [461, 4.2, 2, 0.05, 0.35], [63, 3.85, 6, 0.12, 0.15], [168, 3.5, 4, 0.1, 0.2], [178, 3.4, 3, 0.06, 0.25], [186, 3.35, 2, 0.06, 0.35]];
const haze = [[410, 3.5, 16, 0.35, 0.07], [425, 3.9, 20, 0.25, 0.06], [474, 3.6, 8, 0.5, 0.13], [270, 2.68, 55, 0.1, 0.08], [200, 2.7, 50, 0.2, 0.06], [215, 3.2, 30, 0.3, 0.04], [90, 2.75, 70, 0.15, 0.05], [252, 3.2, 18, 0.25, 0.08]];

paint("backscatter", (x, h) => {
  const edge = (fbm(x / 9, h * 3) - 0.5) * 0.5;
  const grain = rnd();
  let v = 0.487 + (grain - 0.5) * 0.02 + (noise(x / 3, h * 8) - 0.5) * 0.02;

  // surface layer
  v += 0.1 * step(0.75, 0.2, h);
  if (h < 0.22) v += 0.09 * step(0.2, 0.1, h) * (1 - x / 700) * fbm(x / 8, h * 12);

  // receiver noise aloft
  const up = step(2.6, 4.3, h);
  v += up * (0.04 + (grain - 0.4) * 0.12);
  let dark = 0.16 * step(3, 4.6, h) + (x > 235 ? 0.05 * step(2.4, 3.2, h) : 0);
  if (h > 1.6 && h <= 3) dark += 0.004;
  v += blobs(haze, x, h) * (0.1 + 1.5 * fbm(x / 5, h * 5));

  const top = curve(cloudTop, x) + edge * 0.25;
  const base = curve(cloudBase, x) + edge * 0.6;
  if (x < 310 && h < top && h > base - 0.3) {
    const streak = fbm((x + h * 22) / 9, h * 3 - x / 40);
    const inside = step(base - 0.3, base + 0.2, h);
    let c = 0.6 + 0.11 * step(base - 0.1, base + 0.5, h) + (streak - 0.5) * 0.14;
    if (x > 165) c -= 0.36 * step(165, 200, x) * step(3.9, 3.5, h) * (streak - 0.15) * step(2.6, 2.9, h);
    if (x > 232) c -= 0.02 + 0.0009 * (x - 232);
    if (x > 52 && x < 132 && h > 3.72) {
      c += (noise(x / 2.5, 3) - 0.6) * 0.26;
      if (x > 108 || x < 76) c -= 0.06;
    }
    v = v + (c - v) * inside;
    dark *= 1 - inside;
    if (x < 50 && h > 3.3 && h < 4.4) {
      v += 0.14 * step(3.3 + noise(x / 3, 1) * 0.7, 4.0, h) * step(4.42, 4.2, h) * step(54, 26, x + edge * 70);
      v = Math.min(v, 0.84);
    }
  }
  if (x < 14 && Math.abs(h - 4.17 + x * 0.008) < 0.05) v = 0.95;
  v += blobs(redSpots, x, h);

  // dense liquid layers
  const d1 = x > 46 && x < 132 ? Math.abs(h - curve(coreLine, x)) + (noise(x / 3, h * 9) - 0.4) * 0.08 : 9;
  const d2 = x > 131 && x < 224 ? Math.abs(h - curve(coreLine2, x)) + (noise(x / 2, h * 5) - 0.5) * 0.2 : 9;
  const d3 = x > 140 && x < 174 ? Math.abs(h - (3.7 - (x - 150) * 0.014)) + (noise(x / 2, h * 9) - 0.2) * 0.2 : 9;
  const d = Math.min(d1, d2 * 0.62, d3);
  if (d < 0.07) {
    v = 0.99 - d * 1.6;
    if (d < 0.035 && noise(x / 5, h * 5) > 0.35) return BLACK;
    return ramp(v);
  }
  if (d < 0.1) v = Math.max(v, 0.8);

  if (rnd() < dark) return [0, 20, 0];
  if (h < 0.02) return rnd() < 0.35 ? BLACK : [60, 230, 0];
  return ramp(v);
});

// doppler: height above which the return is only noise
const noiseBase = [[0, 4.2], [18, 4.3], [30, 4.5], [50, 4.45], [53, 3.9], [60, 3.8], [72, 4.0], [84, 4.25], [108, 4.2], [120, 4.1], [140, 4.05], [170, 4.05], [200, 4.1], [216, 4.2], [228, 4.15], [236, 3.85], [254, 3.4], [270, 3.2], [300, 3.0], [340, 2.85], [380, 2.7], [392, 2.9], [398, 3.95], [420, 4.0], [440, 3.9], [460, 3.9], [466, 4.15], [478, 4.05]];
const motion = [
  [30, 4.3, 12, 0.2, -0.12], [44, 4.25, 8, 0.12, 0.28], [20, 3.5, 16, 0.35, 0.1], [42, 3.65, 16, 0.25, -0.22],
  [68, 4.0, 8, 0.1, 0.25], [61, 3.85, 4, 0.08, 0.3], [82, 3.62, 18, 0.1, 0.16], [90, 3.85, 14, 0.15, -0.14],
  [122, 3.8, 10, 0.3, 0.14], [124, 3.53, 10, 0.06, 0.26], [136, 3.45, 10, 0.1, 0.1], [95, 3.3, 34, 0.15, -0.14],
  [120, 3.05, 30, 0.28, -0.24], [140, 2.9, 18, 0.2, -0.24], [155, 2.68, 20, 0.18, -0.26], [178, 2.6, 18, 0.14, -0.18],
  [145, 3.75, 8, 0.2, -0.26], [175, 3.6, 24, 0.35, -0.22], [195, 3.9, 22, 0.25, -0.24], [180, 3.2, 20, 0.3, -0.22],
  [210, 3.45, 9, 0.2, -0.34], [222, 3.72, 14, 0.15, -0.3], [236, 3.45, 10, 0.14, -0.28], [242, 3.08, 12, 0.15, -0.3],
  [250, 3.25, 12, 0.2, -0.2], [220, 4.1, 10, 0.1, 0.2], [196, 3.55, 4, 0.18, 0.2], [212, 3.1, 7, 0.22, 0.16],
  [225, 3.3, 5, 0.2, 0.12], [152, 3.9, 4, 0.15, 0.16], [250, 2.66, 34, 0.09, -0.18], [222, 2.72, 8, 0.1, -0.16],
  [260, 2.88, 30, 0.08, 0.12], [290, 2.45, 10, 0.08, 0.12], [405, 3.5, 14, 0.4, -0.16], [470, 3.9, 9, 0.25, -0.18],
  [345, 2.3, 60, 0.3, -0.05], [425, 3.5, 18, 0.2, 0.08], [440, 2.5, 30, 0.6, 0.06], [180, 0.6, 22, 0.25, -0.05]
];
const columns = [];
for (let x = 0; x < 478; x++) columns.push(rnd());

function noisePixel(x, h) {
  const r = rnd();
  // some profiles saturate almost completely
  const m = columns[x] > 0.72 ? 0.86 : 0.16 + columns[x] * 0.3 + noise(x / 2, h * 3) * 0.15;
  if (r < m) return MAGENTA;
  const k = rnd();
  if (k < 0.33) return BLACK;
  if (k < 0.4) return [250, 230, 240];
  if (k < 0.6) return [190, 0, 110];
  return ramp(rnd() * 0.9);
}

paint("doppler", (x, h) => {
  // warp the coordinates to get wispy structures
  const wx = x + (fbm(x / 14 + 7, h * 4) - 0.5) * 26;
  const wh = h + (fbm(x / 10, h * 5 + 31) - 0.5) * 0.5;
  const tex = fbm(wx / 10, wh * 5);
  const fine = fbm(x / 4 + 40, h * 9);
  const col = columns[x];
  const limit = curve(noiseBase, x) + (fine - 0.5) * 0.4;

  if (h > limit) {
    // mixed zone right of the cloud
    if (x > 232 && h < 4.3 && rnd() < step(4.4, 2.6, h) * (col > 0.72 ? 0.15 : 1.1)) {
      return ramp(0.54 + (rnd() - 0.5) * 0.2);
    }
    return noisePixel(x, h);
  }

  let v = 0.545 + (tex - 0.5) * 0.2 * step(0, 2, h + 0.8) + (fine - 0.5) * 0.1;
  // rising air on the left, calmer air near the ground
  v += 0.09 * step(170, 20, x) * step(0.8, 1.4, h);
  v += 0.11 * step(58, 25, x) * step(1.5, 2.4, h) * step(3.15, 2.75, h + fine * 0.3) + 0.03 * step(240, 60, x) * step(1.3, 2, h) * step(2.9, 2.5, h);
  v -= 0.035 * step(1.3, 0.6, h);
  if (h < 0.14) v += noise(x / 3, 2) * 0.14;
  v += blobs(motion, wx, wh) * (0.4 + tex * 1.2);
  if (h < 1.2) v = Math.max(v, 0.5 - (0.5 - v) * 0.4);

  if (h > 1.0 && h < 2.6 + fine * 0.5) {
    const k = step(1, 1.8, h) * step(3.1, 2.5, h);
    v += (rnd() - 0.5) * 0.12 * k + (col - 0.5) * 0.07 * k;
    if (rnd() < k * (col > 0.8 ? 0.22 : 0.03)) v += 0.3 * rnd();
    if (x < 50 && col > 0.35 && rnd() < 0.55 * step(1.2, 2.3, h)) v = 0.8 + rnd() * 0.1;
    if (x > 100 && col > 0.93 && rnd() < 0.3 * step(1.6, 2.5, h)) return MAGENTA;
  }
  if (x > 235 && h > 2.2 && rnd() < 0.25 * step(2.1, 3.4, h) * (0.2 + col)) return noisePixel(x, h);
  return ramp(v);
});

// green graticule
function grid(ctx, w, h, majorsY, minorY) {
  ctx.fillStyle = "#000";
  ctx.fillRect(0, 0, w, h);
  ctx.fillStyle = "#0b2e0e";
  for (let i = 1; i < 60; i++) ctx.fillRect(Math.round(i * w / 60), 0, 1, h);
  for (let y = minorY; y < h; y += minorY) ctx.fillRect(0, Math.round(y), w, 1);
  ctx.fillStyle = "#155a1b";
  for (let i = 1; i < 6; i++) ctx.fillRect(Math.round(i * w / 6), 0, 1, h);
  majorsY.forEach((y) => ctx.fillRect(0, y, w, 1));
}

// A-scope trace
{
  const ctx = document.getElementById("ascope").getContext("2d");
  grid(ctx, 314, 104, [24, 49, 73, 98], 4.9);
  const shape = [[1, 92], [2, 40], [3, 12], [5, 18], [6, 32], [9, 46], [11, 56], [14, 68], [17, 76], [22, 80], [30, 86], [40, 90], [52, 92], [80, 91], [85, 86], [90, 81], [94, 86], [102, 88], [106, 94], [313, 95]];
  ctx.fillStyle = "#fff";
  ctx.fillRect(1, 12, 1, 92);
  let last = 12;
  for (let x = 2; x < 314; x++) {
    const y = Math.round(curve(shape, x) + (rnd() - 0.5) * 7);
    ctx.fillRect(x, Math.min(y, last), 1, Math.max(2, Math.abs(y - last) + 1));
    last = y;
  }
  ctx.fillStyle = "#f0e840";
  ctx.fillRect(235, 0, 1, 104);
}

// velocity trace
{
  const ctx = document.getElementById("velocity").getContext("2d");
  grid(ctx, 309, 104, [26, 52, 77], 5.15);
  const spread = [[2, 2], [20, 3], [50, 10], [75, 15], [78, 6], [100, 7], [104, 12]];
  ctx.fillStyle = "#fff";
  ctx.fillRect(1, 52, 1, 52);
  for (let x = 2; x < 104; x++) {
    const s = curve(spread, x);
    const mid = 52 - 5 * step(40, 65, x) + 9 * step(72, 80, x) + Math.sin(x / 4) * 2;
    const a = Math.round(mid - rnd() * s), b = Math.round(mid + rnd() * s);
    ctx.fillRect(x, a, 1, Math.max(2, b - a));
  }
  for (let x = 104; x < 309; x++) {
    let top = 48 - rnd() * 12, bottom = 62 + rnd() * 14;
    if (rnd() < 0.36) top = 0;
    else if (rnd() < 0.1) top = rnd() * 40;
    if (rnd() < 0.48) bottom = 104;
    else if (rnd() < 0.2) bottom = 75 + rnd() * 25;
    ctx.fillRect(x, Math.round(top), 1, Math.round(bottom - top));
  }
}
```
